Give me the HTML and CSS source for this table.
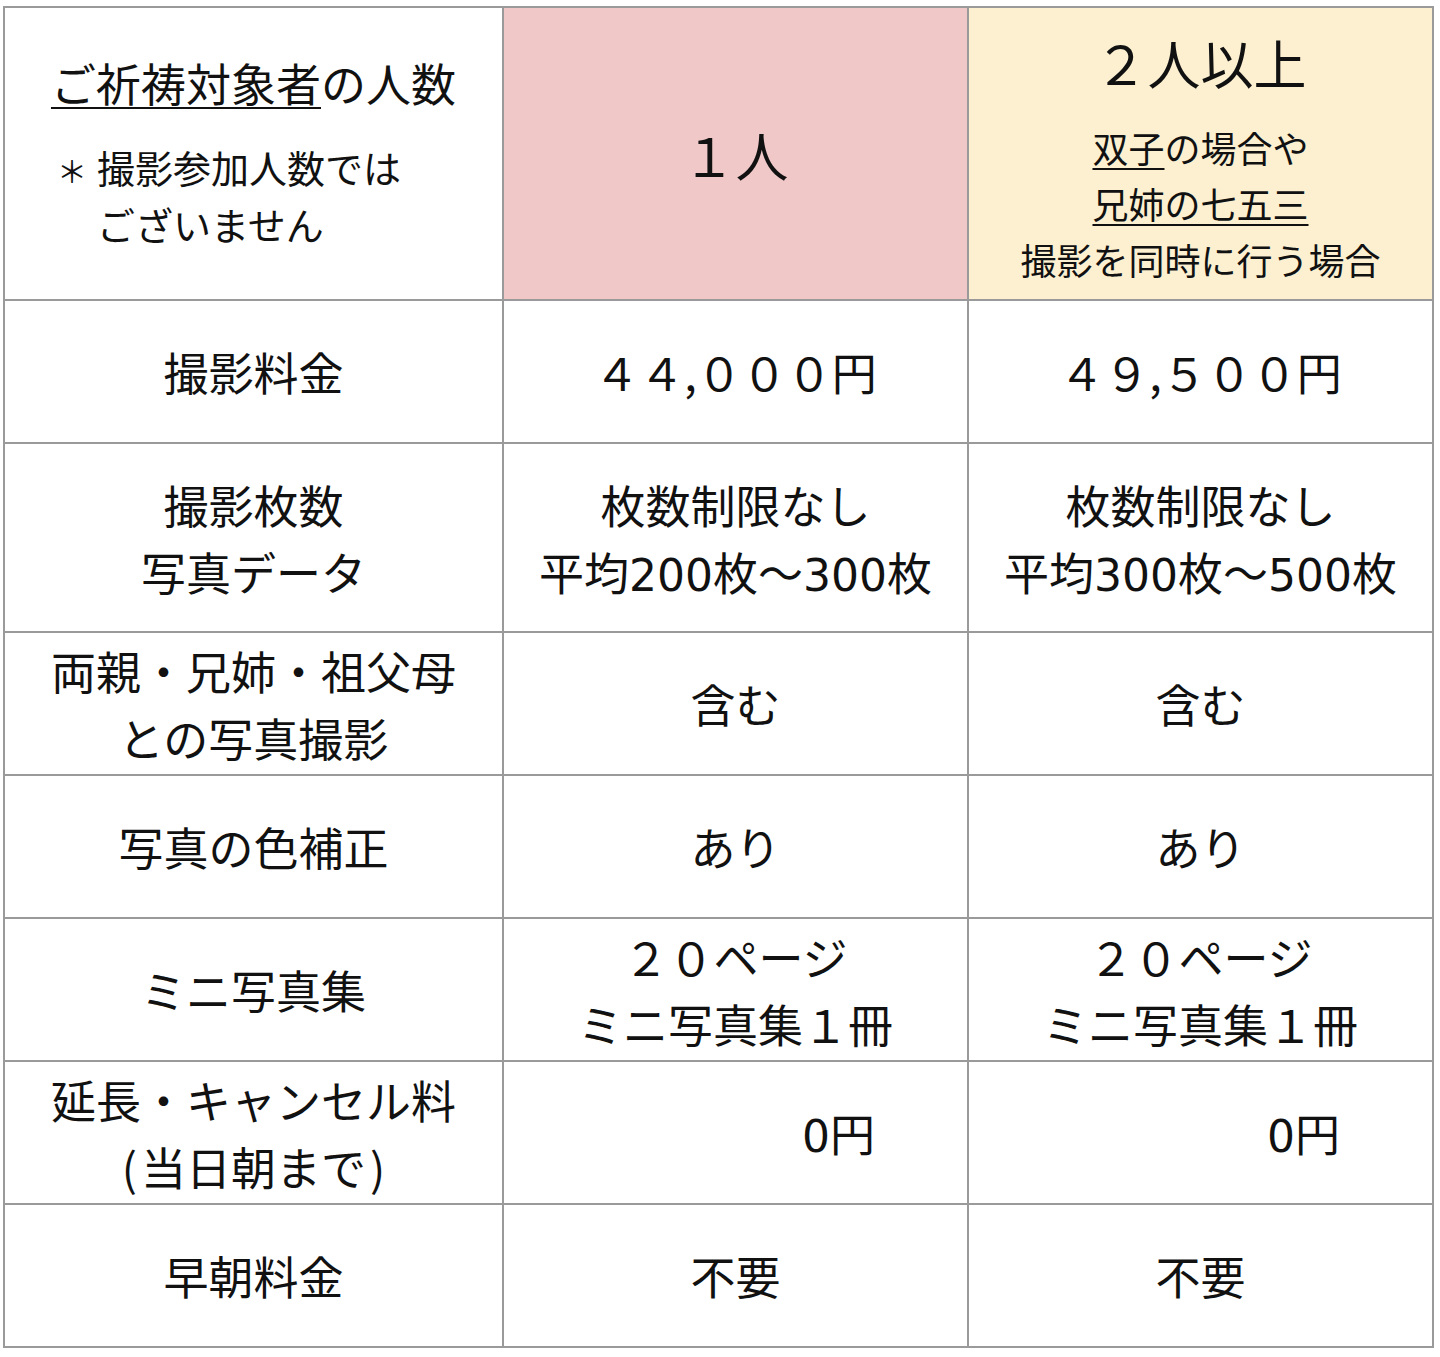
FILE: index.html
```html
<!DOCTYPE html>
<html lang="ja">
<head>
<meta charset="utf-8">
<title>料金表</title>
<link rel="stylesheet" href="styles.css">
</head>
<body>
<div class="table">
  <div class="cell head-left">
    <p class="head-title"><span class="ul">ご祈祷対象者</span>の人数</p>
    <p class="note"><span class="ast">＊</span>撮影参加人数では<br>ございません</p>
  </div>
  <div class="cell head-pink"><p class="big">１人</p></div>
  <div class="cell head-yellow">
    <p class="big">２人以上</p>
    <p class="sub"><span class="ul">双子</span>の場合や<br><span class="ul">兄姉の七五三</span><br>撮影を同時に行う場合</p>
  </div>

  <div class="cell"><p>撮影料金</p></div>
  <div class="cell"><p>４４,０００円</p></div>
  <div class="cell"><p>４９,５００円</p></div>

  <div class="cell"><p>撮影枚数<br>写真データ</p></div>
  <div class="cell"><p>枚数制限なし<br>平均<span class="num">200</span>枚〜<span class="num">300</span>枚</p></div>
  <div class="cell"><p>枚数制限なし<br>平均<span class="num">300</span>枚〜<span class="num">500</span>枚</p></div>

  <div class="cell"><p>両親・兄姉・祖父母<br>との写真撮影</p></div>
  <div class="cell"><p>含む</p></div>
  <div class="cell"><p>含む</p></div>

  <div class="cell"><p>写真の色補正</p></div>
  <div class="cell"><p>あり</p></div>
  <div class="cell"><p>あり</p></div>

  <div class="cell"><p>ミニ写真集</p></div>
  <div class="cell"><p>２０ページ<br>ミニ写真集１冊</p></div>
  <div class="cell"><p>２０ページ<br>ミニ写真集１冊</p></div>

  <div class="cell"><p>延長・キャンセル料<br><span class="paren">(</span>当日朝まで<span class="paren">)</span></p></div>
  <div class="cell shift"><p><span class="num">0</span>円</p></div>
  <div class="cell shift"><p><span class="num">0</span>円</p></div>

  <div class="cell"><p>早朝料金</p></div>
  <div class="cell"><p>不要</p></div>
  <div class="cell"><p>不要</p></div>
</div>
</body>
</html>
```

FILE: styles.css
```css
html, body {
  margin: 0;
  padding: 0;
  background: #ffffff;
}

body {
  font-family: "Noto Sans CJK JP", "Noto Sans", sans-serif;
  color: #111111;
}

.table {
  margin: 6px 0 0 3px;
  width: 1431px;
  display: grid;
  grid-template-columns: 497px 463px 463px;
  grid-template-rows: 291px 141px 187px 141px 141px 141px 141px 141px;
  gap: 2px;
  padding: 2px;
  background: #9a9a9a;
  box-sizing: border-box;
}

.cell {
  background: #ffffff;
  display: flex;
  flex-direction: column;
  align-items: center;
  justify-content: center;
  text-align: center;
  font-size: 45px;
  line-height: 67px;
}

.cell p {
  margin: 0;
}

.num {
  font-family: "DejaVu Sans", "Noto Sans", sans-serif;
  font-size: 44px;
  line-height: 1;
}

.paren {
  display: inline-block;
  padding: 0 4px;
}

.ul {
  text-decoration: underline;
  text-decoration-thickness: 2px;
  text-underline-offset: 5px;
}

.head-left {
  justify-content: flex-start;
  align-items: stretch;
  padding-top: 41px;
}

.head-title {
  text-align: center;
}

.note {
  font-size: 38px;
  line-height: 57px;
  margin-top: 22px !important;
  text-align: left;
  padding-left: 92px;
  text-indent: -32px;
}

.ast {
  display: inline-block;
  width: 32px;
  text-indent: 0;
  text-align: left;
  font-size: 30px;
  line-height: 1;
  margin-left: -8px;
  margin-right: 8px;
}

.head-pink {
  background: #f0c8c8;
}

.head-yellow {
  background: #fcf0d1;
  justify-content: flex-start;
  padding-top: 19px;
}

.big {
  font-size: 53px;
  line-height: 70px;
}

.sub {
  font-size: 36px;
  line-height: 56px;
  margin-top: 22px !important;
}

.shift {
  padding-left: 206px;
}
```
